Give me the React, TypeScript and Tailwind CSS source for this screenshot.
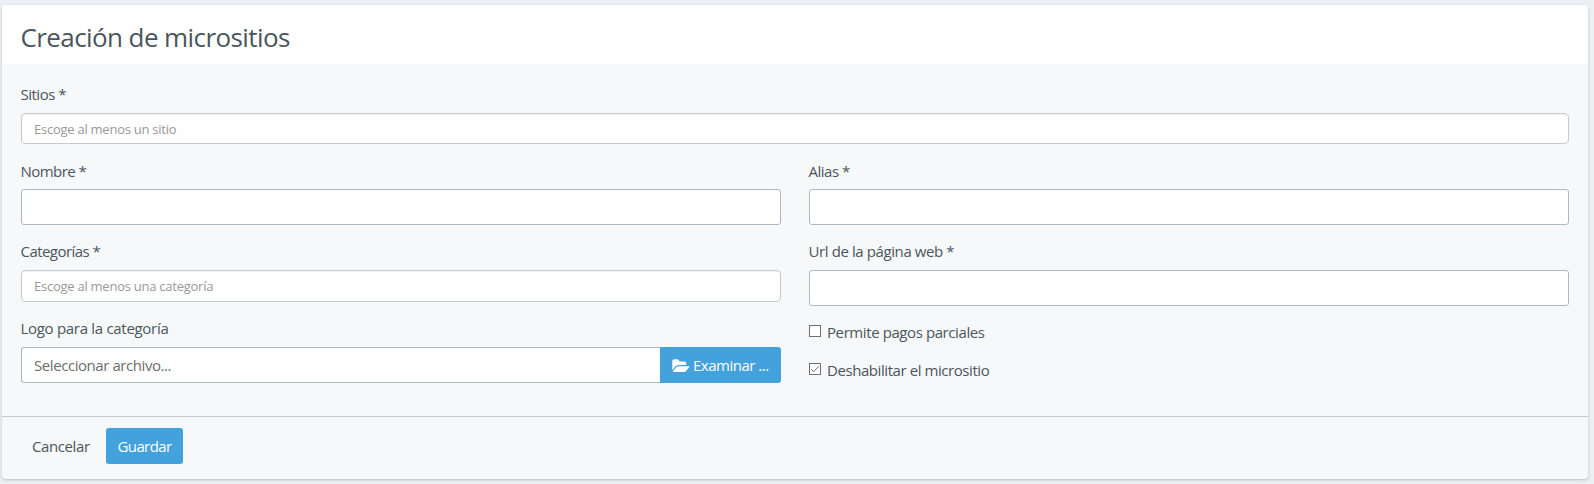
import type { ReactNode } from "react";

function Label({ children, className = "" }: { children: ReactNode; className?: string }) {
  return <label className={`block h-[22px] -indent-[0.5px] text-[15px] leading-[22px] whitespace-nowrap ${className}`}>{children}</label>;
}

function TextInput() {
  return <input type="text" className="block h-9 w-full rounded-[3px] border border-[#acb8c0] bg-white px-3 outline-none" />;
}

function TagSelect({ children, className }: { children: ReactNode; className: string }) {
  return (
    <div
      className={`flex items-center rounded-[4px] border border-[#c8caca] bg-white px-3 pt-0.5 text-[13px] whitespace-nowrap text-[#999] shadow-[inset_0_1px_1px_rgba(0,0,0,0.05)] ${className}`}
    >
      {children}
    </div>
  );
}

function Check({ checked = false, children, className }: { checked?: boolean; children: ReactNode; className: string }) {
  return (
    <label className="flex h-[22px] items-start">
      <span className="mt-1 block size-3 shrink-0 border border-[#707070] bg-white">
        {checked && (
          <svg viewBox="0 0 10 10" className="block size-2.5" fill="none" stroke="#666" strokeWidth="1">
            <path d="M1.3 5.2 3.7 7.6 8.8 2.4" />
          </svg>
        )}
      </span>
      <span className={`ml-1.5 text-[15px] leading-[22px] whitespace-nowrap ${className}`}>{children}</span>
    </label>
  );
}

export default function App() {
  return (
    <div className="h-[484px] overflow-hidden bg-[#ebeff2] pt-[5px] pl-0.5 font-['Open_Sans','Noto_Sans',sans-serif] text-[#4b565c]">
      <form className="h-[474px] w-[1586px] overflow-hidden rounded-[4px] bg-[#f6f8fa] shadow-[0_1px_3px_rgba(0,0,0,0.2)]">
        <header className="flex h-[59px] items-center bg-white px-[19px]">
          <h1 className="mt-[5px] -indent-[0.5px] text-[26px] leading-9 whitespace-nowrap tracking-[-0.59px]">Creación de micrositios</h1>
        </header>

        <div className="h-[353px] border-b border-[#c4cbd0] px-[19px] pt-[19px]">
          <Label className="tracking-[-0.5px]">Sitios *</Label>
          <TagSelect className="mt-2 h-[31px] tracking-[-0.25px]">Escoge al menos un sitio</TagSelect>

          <div className="mt-4 grid grid-cols-2 gap-x-7">
            <div>
              <Label className="tracking-[-0.55px]">Nombre *</Label>
              <div className="mt-[7px]">
                <TextInput />
              </div>
              <Label className="mt-[15px] tracking-[-0.55px]">Categorías *</Label>
              <TagSelect className="mt-2 h-8 tracking-[-0.25px]">Escoge al menos una categoría</TagSelect>
              <Label className="mt-[15px] tracking-[-0.3px]">Logo para la categoría</Label>
              <div className="mt-2 flex h-9">
                <div className="flex flex-1 items-center rounded-l-[3px] border border-r-0 border-[#acb8c0] bg-white px-3 text-[15px] whitespace-nowrap text-[#6d6d6d] tracking-[-0.43px]">
                  Seleccionar archivo...
                </div>
                <button type="button" className="flex w-[121px] items-center rounded-r-[3px] bg-[#43a1dc] pl-3 text-[15px] whitespace-nowrap text-white tracking-[-0.5px]">
                  <svg viewBox="0 0 1920 1536" className="mr-[3px] h-[14px] w-[18px] shrink-0" fill="currentColor">
                    <path d="M1879 952q0 31-31 66l-336 396q-43 51-120.500 86.500t-143.500 35.500h-1088q-34 0-60.500-13t-26.500-43q0-31 31-66l336-396q43-51 120.500-86.500t143.500-35.500h1088q34 0 60.500 13t26.500 43zM1536 608v160h-832q-94 0-197 47.500t-164 119.500l-337 396-5 6q0-4-.5-12.500t-.5-12.500v-960q0-92 66-158t158-66h320q92 0 158 66t66 158v32h544q92 0 158 66t66 158z" />
                  </svg>
                  Examinar ...
                </button>
              </div>
            </div>

            <div>
              <Label className="tracking-[-0.5px]">Alias *</Label>
              <div className="mt-[7px]">
                <TextInput />
              </div>
              <Label className="mt-[15px] tracking-[-0.4px]">Url de la página web *</Label>
              <div className="mt-2">
                <TextInput />
              </div>
              <div className="mt-[15px] flex flex-col gap-4">
                <Check className="tracking-[-0.41px]">Permite pagos parciales</Check>
                <Check checked className="tracking-[-0.43px]">Deshabilitar el micrositio</Check>
              </div>
            </div>
          </div>
        </div>

        <footer className="flex pt-[11px] pl-[19px] text-[15px]">
          <button type="button" className="h-9 w-[81px] pl-[11px] text-left tracking-[-0.4px]">Cancelar</button>
          <button type="button" className="ml-1 flex h-9 w-[77px] items-center justify-center rounded-[3px] bg-[#43a1dc] text-white tracking-[-0.6px]">Guardar</button>
        </footer>
      </form>
    </div>
  );
}
